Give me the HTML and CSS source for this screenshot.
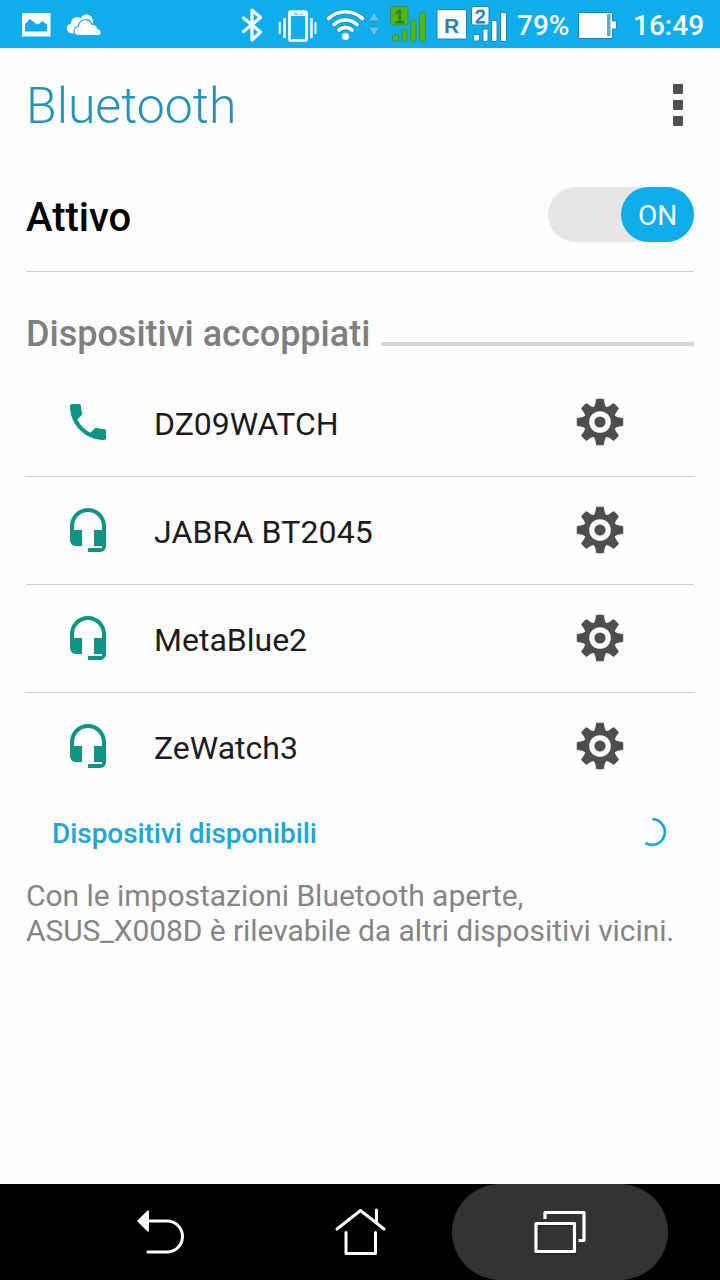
FILE: index.html
```html
<!DOCTYPE html>
<html lang="it">
<head>
<meta charset="utf-8">
<title>Bluetooth</title>
<link rel="stylesheet" href="styles.css">
</head>
<body>
<svg class="defs" width="0" height="0" aria-hidden="true">
  <symbol id="headset" viewBox="0 0 48 48">
    <path d="M24 2C14 2 6 10 6 20v14c0 3.300 2.700 6 6 6h6V24h-8v-4C10 12.300 16.300 6 24 6s14 6.300 14 14v4h-8v16h8v2H24v4h12c3.300 0 6-2.700 6-6V20C42 10 34 2 24 2z"/>
  </symbol>
  <symbol id="gear" viewBox="-24 -24 48 48">
    <path id="tooth" d="M-6-15.500Q-5-16.500-4.700-18L-4-22.300Q-3.800-23.200-2.900-23.200H2.900Q3.800-23.200 4-22.300L4.700-18Q5-16.500 6-15.500V15.500Q5 16.500 4.700 18L4 22.300Q3.800 23.200 2.900 23.200H-2.900Q-3.800 23.200-4 22.300L-4.700 18Q-5 16.500-6 15.500z"/>
    <use href="#tooth" transform="rotate(45)"/>
    <use href="#tooth" transform="rotate(90)"/>
    <use href="#tooth" transform="rotate(135)"/>
    <circle r="15.800"/>
    <circle r="8.200" fill="none" stroke="#fefefe" stroke-width="5.200"/>
  </symbol>
</svg>

<div class="status-bar">
  <svg class="st-photo" viewBox="21 0 30 48"><path fill="#fff" fill-rule="evenodd" d="M22 13H50.500V36.500H22zM25 31.500V24L30 19L37 24.500L39.500 23.500L42 21L47 24.500V31.500z"/></svg>
  <svg class="st-cloud" viewBox="66 0 36 48">
    <path fill="#fff" d="M72 33.500C65.500 33 65 24.500 71 23.500C71 17.500 77 15.500 80.500 18C84 12.500 92 13.500 93 21L91 32z"/>
    <path fill="#fff" stroke="#0fadec" stroke-width="1.100" d="M78 35.500C72.500 35 73 26.500 78.500 26.500C79 18.500 89.500 17 92 24.500C95 24 97.500 25.500 97.500 28.500C102.500 29.500 102 35.500 98 35.500z"/>
  </svg>
  <svg class="st-bt" viewBox="240 0 26 48"><path fill="none" stroke="#fff" stroke-width="3.200" stroke-linejoin="round" stroke-linecap="round" d="M243.500 18l17 14L252 40V10l8.500 7.500-17 14"/></svg>
  <svg class="st-vibrate" viewBox="278 0 40 48"><g fill="none" stroke="#fff"><rect x="289.500" y="11.500" width="17" height="29" rx="1.500" stroke-width="2.700"/><path stroke-width="4" d="M291 14h14"/><path stroke-width="2.500" d="M284.500 18v20M311.500 18v20"/><path stroke-width="2" d="M279.700 22v12M315.500 22v12"/></g><path stroke="#0fadec" d="M293.500 14h5M300.500 14h2"/></svg>
  <svg class="st-wifi" viewBox="325 0 42 48">
    <g fill="none" stroke="#168bb6" stroke-width="5.200" stroke-linecap="round"><path d="M328.500 18.500c10-9 24-9 34 0M334 24.500c7-6 16-6 23 0M339 30c4.200-3.300 8.800-3.300 13 0"/></g>
    <g fill="none" stroke="#fff" stroke-width="3.700" stroke-linecap="round"><path d="M328.500 18.500c10-9 24-9 34 0M334 24.500c7-6 16-6 23 0M339 30c4.200-3.300 8.800-3.300 13 0"/></g><circle cx="345.500" cy="36.500" r="4" fill="#fff" stroke="#168bb6" stroke-width=".7"/>
  </svg>
  <svg class="st-arrows" viewBox="367 0 14 48"><path fill="#5cc5f2" stroke="#2b94c4" stroke-linejoin="round" d="M374 11.500l5.300 9.500h-10.600zM368.700 27h10.600l-5.300 9.500z"/></svg>
  <svg class="st-sim one" viewBox="389 0 38 48">
    <rect x="390.500" y="6.500" width="17.500" height="18.500" rx="2"/><rect x="392.500" y="34.500" width="6" height="6.500" rx="1.500"/><rect x="402" y="29" width="5" height="12.500" rx="1.500"/><rect x="410.500" y="20.500" width="5.500" height="21" rx="1.500"/><rect x="419.500" y="12.500" width="6" height="29" rx="1.500"/>
    <text x="394" y="22.500">1</text>
  </svg>
  <svg class="st-roam" viewBox="435 0 33 48"><rect x="437" y="9.500" width="29.500" height="29.500" rx="1.500"/><text x="444" y="32.500">R</text></svg>
  <svg class="st-sim two" viewBox="470 0 38 48">
    <rect x="471.500" y="6.500" width="17.500" height="18.500" rx="2"/><rect x="473.500" y="34.500" width="6" height="6.500" rx="1.500"/><rect x="483" y="29" width="5" height="12.500" rx="1.500"/><rect x="491.500" y="20.500" width="5.500" height="21" rx="1.500"/><rect x="500.500" y="12.500" width="6" height="29" rx="1.500"/>
    <text x="475" y="22.500">2</text>
  </svg>
  <span class="st-percent">79%</span>
  <svg class="st-battery" viewBox="578 0 40 48"><path fill="#fff" stroke="#168bb6" d="M578.500 12.500h34v8.500h4v8h-4v9.500h-34z"/><path fill="#66a9cb" d="M607 14h3.500v22H607z"/></svg>
  <span class="st-time">16:49</span>
</div>

<header class="app-bar">
  <h1 class="title">Bluetooth</h1>
  <div class="menu"><i></i><i></i><i></i></div>
</header>

<main class="content">
  <div class="toggle-row">
    <span class="toggle-label">Attivo</span>
    <div class="switch"><span class="thumb">ON</span></div>
  </div>
  <div class="section"><h2 class="section-title">Dispositivi accoppiati</h2><span class="section-line"></span></div>
  <ul class="devices">
    <li class="device">
      <svg class="device-icon phone" viewBox="0 0 48 48"><path d="M13.200 21.600c2.900 5.700 7.500 10.300 13.200 13.200l4.400-4.400c.5-.5 1.300-.7 2-.5 2.300.7 4.700 1.100 7.200 1.100 1.100 0 2 .9 2 2v7c0 1.100-.9 2-2 2C21.200 42 6 26.800 6 8c0-1.100.9-2 2-2h7c1.100 0 2 .9 2 2 0 2.500.4 4.900 1.100 7.200.2.700.1 1.500-.5 2z"/></svg>
      <span class="device-name">DZ09WATCH</span><svg class="gear"><use href="#gear"/></svg>
    </li>
    <li class="device">
      <svg class="device-icon"><use href="#headset"/></svg>
      <span class="device-name wide">JABRA BT2045</span><svg class="gear"><use href="#gear"/></svg>
    </li>
    <li class="device">
      <svg class="device-icon"><use href="#headset"/></svg>
      <span class="device-name">MetaBlue2</span><svg class="gear"><use href="#gear"/></svg>
    </li>
    <li class="device">
      <svg class="device-icon"><use href="#headset"/></svg>
      <span class="device-name">ZeWatch3</span><svg class="gear"><use href="#gear"/></svg>
    </li>
  </ul>
  <div class="available">
    <h3 class="available-title">Dispositivi disponibili</h3>
    <svg class="spinner" viewBox="638 816 32 32"><path fill="none" stroke="#16a9df" stroke-width="2.700" d="M652.500 819.200A12.800 12.800 0 1 1 645.500 843"/></svg>
  </div>
  <p class="note">Con le impostazioni Bluetooth aperte,<br><span class="note-line">ASUS_X008D è rilevabile da altri dispositivi vicini.</span></p>
</main>

<nav class="nav-bar">
  <div class="nav-item back"><svg viewBox="130 1184 60 96"><path fill="none" stroke="#fff" stroke-width="3" stroke-linecap="round" d="M148 1221h19a15.500 15.500 0 0 1 0 31h-19"/><path fill="#fff" d="M137 1221l10.500-10.500q1.500-.5 1.500 1v19q0 1.500-1.500 1z"/></svg></div>
  <div class="nav-item home"><svg viewBox="330 1184 60 96"><path fill="none" stroke="#fff" stroke-width="3" stroke-linecap="round" stroke-linejoin="round" d="M337 1229l23.500-18.500 23.500 18.500M376.500 1210v12.500M346 1232.500v21h29.500v-21"/></svg></div>
  <div class="nav-item active"><svg viewBox="530 1184 60 96"><g fill="none" stroke="#262626" stroke-width="4" transform="translate(1 1.500)"><rect x="536" y="1223" width="38" height="28"/></g><g fill="none" stroke="#fff" stroke-width="3.200" stroke-linejoin="round"><rect x="536" y="1223.500" width="38.500" height="28"/><path d="M545 1219v-6.500h39v28h-5.500"/></g></svg></div>
</nav>
</body>
</html>
```
FILE: styles.css
```css
* { box-sizing: border-box; }
body {
  margin: 0;
  width: 720px;
  height: 1280px;
  display: flex;
  flex-direction: column;
  background: #fefefe;
  color: #1c1c1c;
  font-family: Roboto, "Noto Sans", sans-serif;
  overflow: hidden;
}
h1, h2, h3, p, ul { margin: 0; padding: 0; }
span, h1, h2, h3 { white-space: nowrap; }
.defs { position: absolute; }

.status-bar {
  display: flex;
  flex: none;
  height: 48px;
  background: #0fadec;
  color: #fff;
  font-size: 28px;
  line-height: 52px;
}
.status-bar svg { flex: none; height: 48px; }
.st-photo { width: 30px; margin-left: 21px; }
.st-cloud { width: 36px; margin-left: 15px; }
.st-bt { width: 26px; margin-left: 138px; }
.st-vibrate { width: 40px; margin-left: 12px; }
.st-wifi { width: 42px; margin-left: 7px; }
.st-arrows { width: 14px; }
.st-sim { width: 38px; stroke: #1c88b0; fill: #fff; }
.st-sim text { font: 19px "Liberation Sans", sans-serif; stroke: #2187aa; stroke-width: .8px; fill: #2187aa; }
.st-sim.one { margin-left: 8px; stroke: #35944c; fill: #58b414; }
.st-sim.one text { stroke: #26891f; fill: #26891f; }
.st-sim.two { margin-left: 2px; }
.st-roam { width: 33px; margin-left: 8px; fill: #fff; stroke: #1c88b0; }
.st-roam text { font: bold 21px "Liberation Sans", sans-serif; stroke: none; fill: #2187aa; }
.st-percent { width: 60px; margin-left: 9px; font-weight: 500; }
.st-battery { width: 40px; margin-left: 1px; }
.st-time { margin-left: 15px; font-weight: 500; }

.app-bar {
  display: flex;
  flex: none;
  justify-content: space-between;
  align-items: center;
  height: 115px;
  padding: 0 37px 0 26px;
}
.title { color: #2592b8; font-size: 50px; font-weight: 300; line-height: 60px; }
.menu { display: flex; flex-direction: column; gap: 6px; padding-bottom: 2px; }
.menu i { width: 10px; height: 10px; border-radius: 1px; background: #505050; }

.content { flex: 1; padding: 0 26px; }
.toggle-row {
  display: flex;
  justify-content: space-between;
  align-items: flex-start;
  height: 109px;
  padding-top: 24px;
  border-bottom: 1px solid #ccc;
}
.toggle-label { color: #000; font-size: 40px; font-weight: 500; line-height: 61px; }
.switch {
  display: flex;
  justify-content: flex-end;
  width: 146px;
  height: 55px;
  border-radius: 28px;
  background: #e6e6e6;
}
.thumb {
  width: 73px;
  border-radius: 28px;
  background: #0fadec;
  color: #fff;
  font-size: 28px;
  line-height: 57px;
  text-align: center;
}
.section { display: flex; align-items: flex-start; height: 97px; padding-top: 42px; }
.section-title { width: 355px; color: #7f7f7f; font-size: 36px; font-weight: 500; line-height: 40px; }
.section-line { flex: 1; height: 4px; margin-top: 28px; background: #d5d6d8; }

.devices { list-style: none; }
.device {
  display: flex;
  align-items: center;
  height: 108px;
  padding: 0 70px 0 38px;
  border-bottom: 1px solid #ccc;
}
.device:last-child { border-bottom-color: transparent; }
.device-icon { width: 48px; height: 48px; margin-top: -1px; fill: #0d9485; }
.device-icon.phone { margin-top: -2px; }
.device-name { flex: 1; margin-left: 42px; padding-top: 3px; font-size: 32px; line-height: 40px; }
.device-name.wide { letter-spacing: .15px; }
.gear { width: 48px; height: 48px; margin-top: -1px; fill: #4e4e4e; }

.available { display: flex; justify-content: space-between; height: 77px; padding: 15px 24px 0 26px; }
.available-title { color: #22a6d8; font-size: 28px; font-weight: 500; line-height: 36px; letter-spacing: -.06px; }
.spinner { width: 32px; height: 32px; }
.note { color: #858585; font-size: 30px; line-height: 35px; letter-spacing: -.03px; white-space: nowrap; }
.note-line { letter-spacing: -.08px; }

.nav-bar { display: flex; flex: none; height: 96px; padding: 0 52px; background: #000; }
.nav-item { width: 216px; height: 96px; padding-left: 78px; }
.nav-item.back { width: 184px; }
.nav-item.home { padding-left: 94px; }
.nav-item.active { border-radius: 48px; background: #333; }
.nav-item svg { display: block; width: 60px; height: 96px; }
```
